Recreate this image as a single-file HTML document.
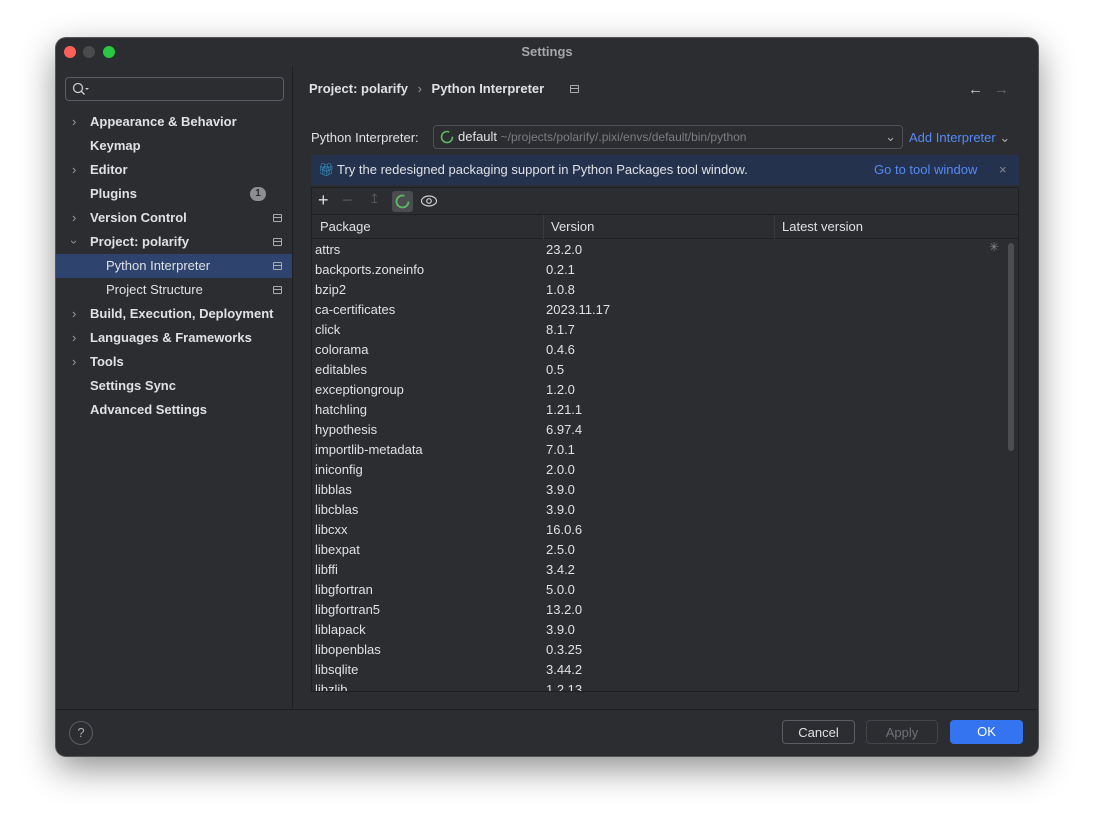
<!DOCTYPE html>
<html><head><meta charset="utf-8"><style>
*{margin:0;padding:0;box-sizing:border-box}
body{width:1094px;height:830px;background:#fff;font-family:"Liberation Sans",sans-serif;font-size:13px;color:#dfe1e5;position:relative;overflow:hidden}
.win{position:absolute;left:56px;top:38px;width:982px;height:718px;background:#2b2d30;border-radius:10px;box-shadow:0 0 0 1px #555,0 12px 35px rgba(0,0,0,.45);overflow:hidden}
.a{position:absolute}
.tl{width:12px;height:12px;border-radius:50%;top:8px}
.side .it{position:absolute;left:0;width:236px;height:24px;line-height:24px;font-weight:bold;padding-left:34px}
.side .it.sub{font-weight:normal;padding-left:50px}
.chev{position:absolute;left:16px;color:#999;font-weight:normal}
.pin{position:absolute;right:10px;top:8px;width:9px;height:8px;border:1px solid #aaa;border-radius:1px}
.pin:after{content:"";position:absolute;left:0;right:0;top:2px;border-top:1px solid #aaa}
.row{position:absolute;left:3px;height:20px;line-height:20px;width:690px}
.row span{position:absolute;left:0}
.row span+span{left:231px}
.btn{position:absolute;height:24px;top:682px;border-radius:4px;text-align:center;line-height:23px}
</style></head><body>
<div class="win">
<div class="a tl" style="left:8px;background:#fe5f57"></div>
<div class="a tl" style="left:27px;background:#4a4b4d"></div>
<div class="a tl" style="left:47px;background:#28c840"></div>
<div class="a" style="left:0;width:982px;top:6px;text-align:center;font-weight:bold;color:#a5a7ab">Settings</div>
<div class="a" style="left:236px;top:28px;width:1px;height:643px;background:#1e1f22"></div>
<div class="a" style="left:0;top:671px;width:982px;height:1px;background:#1e1f22"></div>
<div class="a" style="left:9px;top:39px;width:219px;height:24px;border:1px solid #5a5d63;border-radius:4px"><svg width="20" height="20" style="position:absolute;left:4px;top:2px"><circle cx="8" cy="8" r="4.5" fill="none" stroke="#ccc" stroke-width="1.3"/><path d="M11 11l3.5 3.5" stroke="#ccc" stroke-width="1.3"/><path d="M15 8l2 2 2-2z" fill="#ccc"/></svg></div>
<div class="side">
<div class="it" style="top:72px"><span class="chev">›</span>Appearance &amp; Behavior</div>
<div class="it" style="top:96px">Keymap</div>
<div class="it" style="top:120px"><span class="chev">›</span>Editor</div>
<div class="it" style="top:144px">Plugins<span class="a" style="right:26px;top:5px;width:16px;height:14px;border-radius:7px;background:#8c8e92;color:#2b2d30;font-size:10px;line-height:14px;text-align:center">1</span></div>
<div class="it" style="top:168px"><span class="chev">›</span>Version Control<span class="pin"></span></div>
<div class="it" style="top:192px"><span class="chev" style="transform:rotate(90deg)">›</span>Project: polarify<span class="pin"></span></div>
<div class="it sub" style="top:216px;background:#2e436e">Python Interpreter<span class="pin"></span></div>
<div class="it sub" style="top:240px">Project Structure<span class="pin"></span></div>
<div class="it" style="top:264px"><span class="chev">›</span>Build, Execution, Deployment</div>
<div class="it" style="top:288px"><span class="chev">›</span>Languages &amp; Frameworks</div>
<div class="it" style="top:312px"><span class="chev">›</span>Tools</div>
<div class="it" style="top:336px">Settings Sync</div>
<div class="it" style="top:360px">Advanced Settings</div>
</div>
<div class="a" style="left:253px;top:43px;font-weight:bold">Project: polarify <span style="color:#999;font-weight:normal;margin:0 6px">›</span> Python Interpreter</div>
<div class="a pin" style="left:514px;top:47px;right:auto"></div>
<div class="a" style="left:912px;top:43px;color:#ccc;font-size:15px">←</div>
<div class="a" style="left:938px;top:43px;color:#666;font-size:15px">→</div>
<div class="a" style="left:255px;top:92px">Python Interpreter:</div>
<div class="a" style="left:377px;top:87px;width:470px;height:24px;border:1px solid #4e5157;border-radius:4px;background:#2b2d30;line-height:22px;padding-left:24px;white-space:nowrap">
<svg width="14" height="14" style="position:absolute;left:6px;top:4px"><circle cx="7" cy="7" r="5.5" fill="none" stroke="#5fb865" stroke-width="1.6" stroke-dasharray="28 6"/></svg>default <span style="color:#7a7d82;font-size:12px">~/projects/polarify/.pixi/envs/default/bin/python</span><span class="a" style="right:6px;top:0;color:#aaa">⌄</span></div>
<div class="a" style="left:853px;top:92px;color:#548af7">Add Interpreter <span style="color:#aaa">⌄</span></div>
<div class="a" style="left:255px;top:117px;width:708px;height:30px;background:#25324d;line-height:30px;padding-left:26px">
<span class="a" style="left:7px;top:0;color:#3592c4">🎁︎</span>Try the redesigned packaging support in Python Packages tool window.
<span class="a" style="left:563px;color:#548af7">Go to tool window</span><span class="a" style="left:688px;color:#888">×</span></div>
<div class="a" style="left:255px;top:149px;width:708px;height:505px;border:1px solid #1e1f22">
<div class="a" style="left:6px;top:2px;font-size:18px;line-height:20px;color:#ddd">+</div>
<div class="a" style="left:30px;top:2px;font-size:18px;line-height:20px;color:#555">−</div>
<div class="a" style="left:57px;top:3px;color:#555">↥</div>
<div class="a" style="left:80px;top:3px;width:21px;height:21px;background:#4a4c50;border-radius:3px"><svg width="21" height="21"><circle cx="10.5" cy="10.5" r="6" fill="none" stroke="#5fb865" stroke-width="1.8" stroke-dasharray="30 8"/></svg></div>
<div class="a" style="left:108px;top:5px"><svg width="18" height="16"><ellipse cx="9" cy="8" rx="7.5" ry="5" fill="none" stroke="#ccc" stroke-width="1.2"/><circle cx="9" cy="8" r="2.3" fill="none" stroke="#ccc" stroke-width="1.2"/></svg></div>
<div class="a" style="left:0;top:26px;width:706px;height:25px;border-top:1px solid #1e1f22;border-bottom:1px solid #1e1f22;line-height:24px">
<span class="a" style="left:8px">Package</span><span class="a" style="left:231px;top:0;height:24px;border-left:1px solid #393b40;padding-left:7px">Version</span><span class="a" style="left:462px;top:0;height:24px;border-left:1px solid #393b40;padding-left:7px">Latest version</span></div>
<div class="a" style="left:696px;top:55px;width:6px;height:208px;background:#4c4e52;border-radius:3px"></div>
<div class="a" style="left:677px;top:52px;color:#888;font-size:12px">✳</div>
<div class="a" style="left:0;top:52px;width:690px;height:451px;overflow:hidden">
<div class="row" style="top:0"><span>attrs</span><span>23.2.0</span></div>
<div class="row" style="top:20px"><span>backports.zoneinfo</span><span>0.2.1</span></div>
<div class="row" style="top:40px"><span>bzip2</span><span>1.0.8</span></div>
<div class="row" style="top:60px"><span>ca-certificates</span><span>2023.11.17</span></div>
<div class="row" style="top:80px"><span>click</span><span>8.1.7</span></div>
<div class="row" style="top:100px"><span>colorama</span><span>0.4.6</span></div>
<div class="row" style="top:120px"><span>editables</span><span>0.5</span></div>
<div class="row" style="top:140px"><span>exceptiongroup</span><span>1.2.0</span></div>
<div class="row" style="top:160px"><span>hatchling</span><span>1.21.1</span></div>
<div class="row" style="top:180px"><span>hypothesis</span><span>6.97.4</span></div>
<div class="row" style="top:200px"><span>importlib-metadata</span><span>7.0.1</span></div>
<div class="row" style="top:220px"><span>iniconfig</span><span>2.0.0</span></div>
<div class="row" style="top:240px"><span>libblas</span><span>3.9.0</span></div>
<div class="row" style="top:260px"><span>libcblas</span><span>3.9.0</span></div>
<div class="row" style="top:280px"><span>libcxx</span><span>16.0.6</span></div>
<div class="row" style="top:300px"><span>libexpat</span><span>2.5.0</span></div>
<div class="row" style="top:320px"><span>libffi</span><span>3.4.2</span></div>
<div class="row" style="top:340px"><span>libgfortran</span><span>5.0.0</span></div>
<div class="row" style="top:360px"><span>libgfortran5</span><span>13.2.0</span></div>
<div class="row" style="top:380px"><span>liblapack</span><span>3.9.0</span></div>
<div class="row" style="top:400px"><span>libopenblas</span><span>0.3.25</span></div>
<div class="row" style="top:420px"><span>libsqlite</span><span>3.44.2</span></div>
<div class="row" style="top:440px"><span>libzlib</span><span>1.2.13</span></div>
</div></div>
<div class="a" style="left:13px;top:683px;width:24px;height:24px;border:1px solid #5a5d63;border-radius:50%;text-align:center;line-height:22px;color:#aaa">?</div>
<div class="btn" style="left:726px;width:73px;border:1px solid #5a5d63">Cancel</div>
<div class="btn" style="left:810px;width:72px;border:1px solid #43454a;color:#6f7277">Apply</div>
<div class="btn" style="left:894px;width:73px;background:#3574f0;color:#fff">OK</div>
</div>
</body></html>
